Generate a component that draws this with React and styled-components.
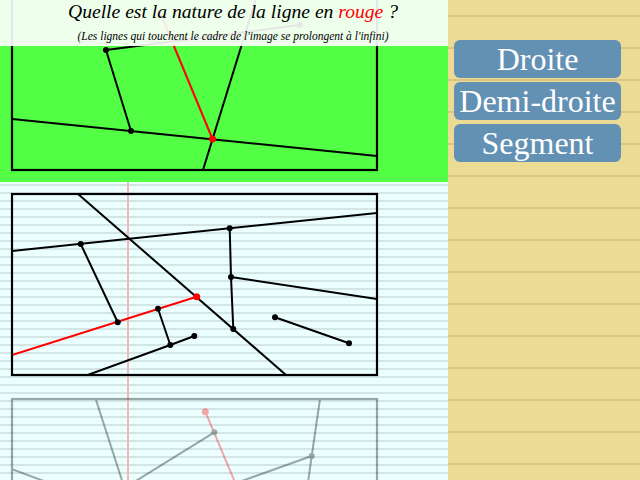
import React from 'react';
import styled, { createGlobalStyle } from 'styled-components';

const GlobalStyle = createGlobalStyle`
  html, body {
    margin: 0;
    padding: 0;
    overflow: hidden;
  }
  body {
    width: 640px;
    height: 480px;
    background: #ecdb95;
  }
`;

// the exercises, in the coordinates of each 448x205 panel
const exercises = [
  {
    status: 'correct',
    lines: [
      { pts: [[12, 142], [377, 179]] },
      { pts: [[131, 154], [106, 73], [300, 48]] },
      { pts: [[203, 193], [259, 12]] },
      { pts: [[212.5, 162], [159, 33]], red: true },
    ],
    dots: [[131, 154], [106, 73], [300, 48]],
    redDot: [212.5, 162],
  },
  {
    lines: [
      { pts: [[78, 12], [286, 193]] },
      { pts: [[12, 69], [377, 31]] },
      { pts: [[80.7, 62], [117.7, 140.3]] },
      { pts: [[158, 126.7], [170.3, 163]] },
      { pts: [[87.7, 193], [170.3, 163], [194.3, 154]] },
      { pts: [[229.7, 46.3], [231, 95], [233.3, 147]] },
      { pts: [[231, 95], [377, 117]] },
      { pts: [[275, 135.3], [349, 161.3]] },
      { pts: [[12, 173], [196.7, 114.7]], red: true },
    ],
    dots: [
      [80.7, 62], [229.7, 46.3], [117.7, 140.3], [158, 126.7], [170.3, 163],
      [194.3, 154], [231, 95], [233.3, 147], [275, 135.3], [349, 161.3],
    ],
    redDot: [196.7, 114.7],
  },
  {
    faded: true,
    lines: [
      { pts: [[95.7, 12], [128, 112]] },
      { pts: [[12, 82.3], [60, 100]] },
      { pts: [[110, 110], [214.3, 45.3]] },
      { pts: [[225, 100], [311.7, 69]] },
      { pts: [[320, 12], [311.7, 69], [306, 110]] },
      { pts: [[205.3, 24.7], [242, 112]], red: true },
    ],
    dots: [[214.3, 45.3], [311.7, 69]],
    redDot: [205.3, 24.7],
  },
];

const choices = ['Droite', 'Demi-droite', 'Segment'];

const Page = styled.div`
  display: flex;
  width: 640px;
  height: 480px;
  overflow: hidden;
`;

const Exercises = styled.main`
  position: relative;
  width: 448px;
  height: 480px;
  flex-shrink: 0;
  overflow: hidden;
  background-color: #ebffff;
  background-image:
    linear-gradient(to right, transparent 127px, #f3b9b9 127px, #f3b9b9 129px, transparent 129px),
    repeating-linear-gradient(to bottom, #d3e5e5 0, #d3e5e5 2px, transparent 2px, transparent 8px);
`;

const Header = styled.header`
  position: absolute;
  top: 0;
  left: 0;
  right: 0;
  height: 46px;
  padding-left: 18px;
  box-sizing: border-box;
  background: rgba(255, 255, 255, 0.9);
  text-align: center;
  font-family: "Liberation Serif", serif;
  font-style: italic;
  color: #000;
`;

const Title = styled.h1`
  margin: 0;
  font-size: 19.6px;
  font-weight: normal;
  line-height: 23px;
`;

const Red = styled.span`
  color: #ff0000;
`;

const Note = styled.p`
  margin: 6px 0 0;
  font-size: 11.5px;
  line-height: 14px;
`;

const PanelList = styled.div`
  display: flex;
  flex-direction: column;
  margin-top: -23px;
`;

const Panel = styled.section`
  height: 205px;
  flex-shrink: 0;
  background: ${(p) => (p.$status === 'correct' ? '#52ff44' : 'transparent')};
  opacity: ${(p) => (p.$faded ? 0.34 : 1)};

  svg {
    display: block;
  }
`;

const Sidebar = styled.aside`
  flex: 1;
  display: flex;
  flex-direction: column;
  gap: 4px;
  padding: 40px 19px 0 6px;
  background-color: #ecdb95;
  background-image: repeating-linear-gradient(
    to bottom,
    transparent 0,
    transparent 15px,
    #d8c685 15px,
    #d8c685 17px,
    transparent 17px,
    transparent 32px
  );
`;

const Choice = styled.button`
  height: 38px;
  padding: 0;
  border: none;
  border-radius: 6px;
  background: #6391b4;
  color: #fff;
  font-family: "Liberation Serif", serif;
  font-size: 32px;
  line-height: 36px;
  white-space: nowrap;
  cursor: pointer;
`;

const Diagram = ({ id, data }) => (
  <svg width="448" height="205" viewBox="0 0 448 205">
    <defs>
      <clipPath id={`frame-${id}`}>
        <rect x="12" y="12" width="365" height="181" />
      </clipPath>
    </defs>
    <g clipPath={`url(#frame-${id})`} fill="none" strokeWidth="2" strokeLinejoin="round">
      {data.lines.map((l, i) => (
        <polyline
          key={i}
          points={l.pts.map((p) => p.join(',')).join(' ')}
          stroke={l.red ? '#ff0000' : '#000'}
        />
      ))}
      {data.dots.map(([x, y], i) => (
        <circle key={i} cx={x} cy={y} r="3" fill="#000" stroke="none" />
      ))}
      <circle cx={data.redDot[0]} cy={data.redDot[1]} r="3.5" fill="#ff0000" stroke="none" />
    </g>
    <rect x="12" y="12" width="365" height="181" fill="none" stroke="#000" strokeWidth="2.2" />
  </svg>
);

export default function App() {
  return (
    <>
      <GlobalStyle />
      <Page>
        <Exercises>
          <PanelList>
            {exercises.map((ex, i) => (
              <Panel key={i} $status={ex.status} $faded={ex.faded}>
                <Diagram id={i} data={ex} />
              </Panel>
            ))}
          </PanelList>
          <Header>
            <Title>
              Quelle est la nature de la ligne en <Red>rouge</Red> ?
            </Title>
            <Note>(Les lignes qui touchent le cadre de l'image se prolongent à l'infini)</Note>
          </Header>
        </Exercises>
        <Sidebar>
          {choices.map((c) => (
            <Choice key={c}>{c}</Choice>
          ))}
        </Sidebar>
      </Page>
    </>
  );
}
